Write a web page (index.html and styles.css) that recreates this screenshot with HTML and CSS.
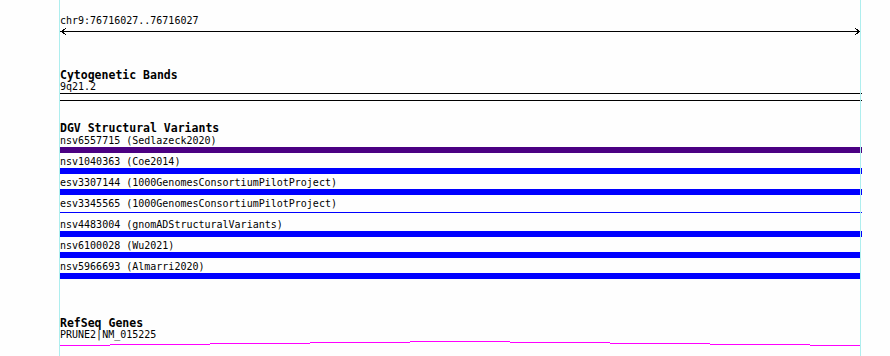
FILE: index.html
```html
<!DOCTYPE html>
<html>
<head>
<meta charset="utf-8">
<link rel="stylesheet" href="styles.css">
</head>
<body>
<div class="view">
  <div class="guide guide-left"></div>
  <div class="guide guide-right"></div>

  <section class="ruler">
    <div class="label">chr9:76716027..76716027</div>
    <svg class="arrow" width="802" height="7" viewBox="0 0 802 7">
      <path d="M0 3.5H801M6 0.5L1 3.5L6 6.5M795 0.5L800 3.5L795 6.5" fill="none" stroke="#000" stroke-width="1"/>
    </svg>
  </section>

  <section class="track cyto">
    <div class="title">Cytogenetic Bands</div>
    <div class="label">9q21.2</div>
    <div class="band"></div>
  </section>

  <section class="track dgv">
    <div class="title">DGV Structural Variants</div>
    <div class="feature"><div class="label">nsv6557715 (Sedlazeck2020)</div><div class="slot"><div class="bar indigo"></div></div></div>
    <div class="feature"><div class="label">nsv1040363 (Coe2014)</div><div class="slot"><div class="bar"></div></div></div>
    <div class="feature"><div class="label">esv3307144 (1000GenomesConsortiumPilotProject)</div><div class="slot"><div class="bar"></div></div></div>
    <div class="feature"><div class="label">esv3345565 (1000GenomesConsortiumPilotProject)</div><div class="slot"><div class="bar thin"></div></div></div>
    <div class="feature"><div class="label">nsv4483004 (gnomADStructuralVariants)</div><div class="slot"><div class="bar"></div></div></div>
    <div class="feature"><div class="label">nsv6100028 (Wu2021)</div><div class="slot"><div class="bar short"></div></div></div>
    <div class="feature"><div class="label">nsv5966693 (Almarri2020)</div><div class="slot"><div class="bar short"></div></div></div>
  </section>

  <section class="track refseq">
    <div class="title">RefSeq Genes</div>
    <div class="label">PRUNE2|NM_015225</div>
    <svg class="gene" width="802" height="6" viewBox="0 0 802 6">
      <path d="M0 4.5H50M50 3.5H150M150 2.5H250M250 1.5H350M350 0.5H450M450 1.5H550M550 2.5H650M650 3.5H750M750 4.5H800" fill="none" stroke="#f0f" stroke-width="1"/>
    </svg>
  </section>
</div>
</body>
</html>
```

FILE: styles.css
```css
html, body {
  margin: 0;
  padding: 0;
  background: #fefefe;
}

.view {
  position: relative;
  width: 802px;
  height: 356px;
  padding: 15px 0 0 60px;
  box-sizing: content-box;
  font-family: "DejaVu Sans Mono", "Liberation Mono", monospace;
  color: #000;
  overflow: hidden;
}

.guide {
  position: absolute;
  top: 0;
  width: 1px;
  height: 356px;
  background: #aeeeee;
  z-index: 2;
}
.guide-left { left: 59px; }
.guide-right { left: 860px; }

section {
  display: flex;
  flex-direction: column;
}

.label {
  font-size: 10px;
  line-height: 12px;
  height: 12px;
  white-space: nowrap;
}

.title {
  font-size: 11.5px;
  font-weight: bold;
  line-height: 12px;
  height: 12px;
  white-space: nowrap;
}

.arrow {
  display: block;
  margin-top: 1px;
  shape-rendering: crispEdges;
}

.cyto { margin-top: 34px; }

.band {
  height: 6px;
  width: 802px;
  border-top: 1px solid #000;
  border-bottom: 1px solid #000;
}

.dgv { margin-top: 21px; }
.dgv .title { margin-bottom: 1px; }

.feature {
  display: flex;
  flex-direction: column;
  padding-bottom: 3px;
}

.slot {
  height: 6px;
}

.bar {
  height: 6px;
  width: 802px;
  background: #0000ff;
}
.bar.indigo { background: #4b0082; }
.bar.short { width: 801px; }
.bar.thin {
  height: 1px;
  margin-top: 2px;
}

.refseq { margin-top: 35px; }

.gene {
  display: block;
  shape-rendering: crispEdges;
}
```
